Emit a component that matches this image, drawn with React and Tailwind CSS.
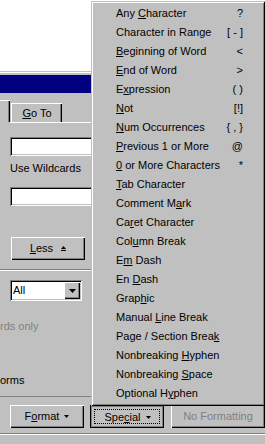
import React from "react";

const items = [
  ["Any &Character", "?"],
  ["Character in Range", "[ - ]"],
  ["&Beginning of Word", "<"],
  ["&End of Word", ">"],
  ["E&xpression", "( )"],
  ["&Not", "[!]"],
  ["&Num Occurrences", "{ , }"],
  ["&Previous 1 or More", "@"],
  ["&0 or More Characters", "*"],
  ["&Tab Character", ""],
  ["Comment M&ark", ""],
  ["Ca&ret Character", ""],
  ["Col&umn Break", ""],
  ["E&m Dash", ""],
  ["En &Dash", ""],
  ["Grap&hic", ""],
  ["Manual &Line Break", ""],
  ["Page / Section Brea&k", ""],
  ["Nonbreaking &Hyphen", ""],
  ["Nonbreaking &Space", ""],
  ["Optional H&yphen", ""],
];

// "&" marks the mnemonic letter
function Label({ text }) {
  const i = text.indexOf("&");
  if (i < 0) return <span>{text}</span>;
  return (
    <span>
      {text.slice(0, i)}
      <span className="underline decoration-1 underline-offset-[1px]">{text[i + 1]}</span>
      {text.slice(i + 2)}
    </span>
  );
}

const raised =
  "shadow-[inset_1px_1px_#fff,inset_-1px_-1px_#000,inset_-2px_-2px_#808080]";
const sunken =
  "shadow-[inset_1px_1px_#808080,inset_-1px_-1px_#fff,inset_2px_2px_#000,inset_-2px_-2px_#c0c0c0]";

function DownArrow() {
  return (
    <svg width="5" height="3" viewBox="0 0 5 3" className="ml-[5px]">
      <path d="M0 0h5L2.5 3z" fill="#000" />
    </svg>
  );
}

export default function App() {
  return (
    <div className="relative w-[265px] h-[444px] overflow-hidden bg-[#c0c0c0] font-['Liberation_Sans',Arial,sans-serif] text-[11px] leading-none text-black">
      {/* document area behind the dialog */}
      <div className="h-[71px] bg-white" />
      <div className="h-px bg-[#c0c0c0]" />
      <div className="h-px bg-white" />
      <div className="h-[2px] bg-[#c0c0c0]" />
      <div className="h-[18px] bg-[#000080]" />

      {/* tabs */}
      <div className="mt-[7px] flex items-end h-[22px]">
        <div className="w-[10px] h-[22px] border-t border-white shadow-[inset_-1px_0_#000,inset_-2px_0_#808080]" />
        <div className="ml-px w-[51px] h-[19px] border-t border-l border-white shadow-[inset_-1px_0_#000,inset_-2px_0_#808080] flex items-center justify-center pt-[1px]">
          <Label text="&Go To" />
        </div>
      </div>
      <div className="ml-[10px] h-px bg-white" />

      {/* find what */}
      <div className="mt-[14px] ml-[10px] w-[200px] h-[19px] bg-white">
        <div className={`w-full h-full ${sunken}`} />
      </div>
      <div className="mt-[6px] ml-[10px] h-[12px] flex items-center">Use Wildcards</div>
      <div className="mt-[13px] ml-[10px] w-[200px] h-[19px] bg-white">
        <div className={`w-full h-full ${sunken}`} />
      </div>

      <div className={`mt-[31px] ml-[11px] w-[74px] h-[23px] flex items-center justify-center ${raised}`}>
        <Label text="&Less" />
        <svg width="5" height="5" viewBox="0 0 5 5" className="ml-[8px]">
          <path d="M2.5 0L5 3H0z" fill="#000" />
          <rect x="0" y="4" width="5" height="1" fill="#000" />
        </svg>
      </div>

      <div className="mt-[9px] w-[92px] h-px bg-[#808080]" />
      <div className="w-[92px] h-px bg-white" />

      {/* search direction */}
      <div className={`mt-[9px] ml-[10px] w-[72px] h-[21px] bg-white flex ${sunken} p-[2px]`}>
        <div className="flex-1 flex items-center pl-px">All</div>
        <div className={`w-[16px] h-full bg-[#c0c0c0] flex items-center justify-center ${raised}`}>
          <svg width="7" height="4" viewBox="0 0 7 4">
            <path d="M0 0h7L3.5 4z" fill="#000" />
          </svg>
        </div>
      </div>

      <div className="mt-[19px] h-[12px] flex items-center whitespace-nowrap text-[#808080]">
        rds only
      </div>
      <div className="mt-[42px] h-[12px] flex items-center whitespace-nowrap">
        orms
      </div>

      <div className="mt-[10px] w-[92px] h-px bg-[#808080]" />

      {/* bottom buttons */}
      <div className="mt-[8px] flex h-[23px]">
        <div className={`ml-[10px] w-[75px] flex items-center justify-center ${raised}`}>
          <Label text="F&ormat" />
          <DownArrow />
        </div>
        <div className="ml-[6px] w-[75px] border border-black shadow-[inset_1px_1px_#808080,inset_-1px_-1px_#808080] p-[3px]">
          <div className="w-full h-full border border-dotted border-black flex items-center justify-center pt-px pl-px">
            <Label text="Spe&cial" />
            <DownArrow />
          </div>
        </div>
        <div className={`ml-[7px] w-[94px] shrink-0 flex items-center justify-center text-[#808080] ${raised}`}>
          No Formatting
        </div>
      </div>
      <div className="mt-[5px] h-px bg-[#808080]" />
      <div className="h-px bg-white" />

      {/* Special dropdown menu */}
      <div className="absolute left-[91px] top-[1px] w-[174px] p-[3px] bg-[#c0c0c0] shadow-[inset_1px_1px_#c0c0c0,inset_-1px_-1px_#000,inset_2px_2px_#fff,inset_-2px_-2px_#808080]">
        {items.map(([label, key]) => (
          <div key={label} className="h-[19px] flex items-center justify-between pl-[22px] pr-[19px] whitespace-nowrap">
            <Label text={label} />
            <span>{key}</span>
          </div>
        ))}
      </div>
    </div>
  );
}
